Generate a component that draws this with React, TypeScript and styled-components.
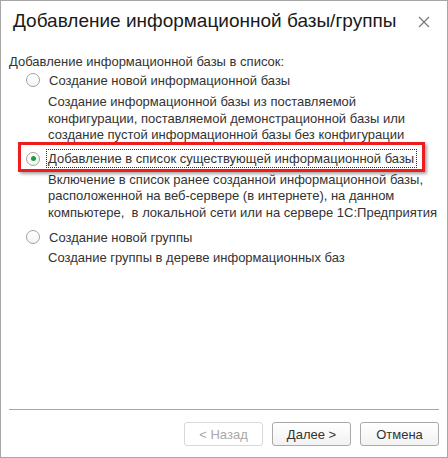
import React from 'react';
import styled, { createGlobalStyle } from 'styled-components';

const GlobalStyle = createGlobalStyle`
  html, body {
    margin: 0;
    padding: 0;
    background: #ffffff;
  }
  body {
    font-family: 'Liberation Sans', Arial, sans-serif;
    color: #333333;
  }
`;

const Window = styled.div`
  display: flex;
  flex-direction: column;
  width: 448px;
  height: 458px;
  box-sizing: border-box;
  border: 1px solid #a6a6a6;
  background: #ffffff;
`;

const Header = styled.div`
  display: flex;
  align-items: center;
  justify-content: space-between;
  height: 40px;
  padding: 0 16px 0 12px;
`;

const Title = styled.h1`
  margin: 0;
  font-size: 19px;
  font-weight: normal;
  color: #1a1a1a;
`;

const CloseButton = styled.button`
  display: flex;
  align-items: center;
  justify-content: center;
  width: 14px;
  height: 14px;
  margin-top: 2px;
  padding: 0;
  border: none;
  background: transparent;
  cursor: pointer;
`;

const Body = styled.div`
  flex: 1;
  padding: 13px 8px 0;
  font-size: 13px;
`;

const Subtitle = styled.div`
  line-height: 16px;
`;

const Row = styled.label<{ $highlight?: boolean }>`
  position: relative;
  display: flex;
  align-items: center;
  gap: 7px;
  height: 20px;
  padding-left: 17px;
  margin-top: ${(p) => (p.$highlight ? '5px' : '0')};

  ${(p) =>
    p.$highlight &&
    `
    &::before {
      content: '';
      position: absolute;
      left: 9px;
      right: 14px;
      top: -7px;
      bottom: -3px;
      border: 3px solid #ee1c1c;
      box-shadow: 2px 2px 3px rgba(0, 0, 0, 0.35);
      pointer-events: none;
    }
  `}
`;

const Radio = styled.span<{ $checked?: boolean }>`
  display: flex;
  align-items: center;
  justify-content: center;
  width: 14px;
  height: 14px;
  box-sizing: border-box;
  border: 1px solid #a3a3a3;
  border-radius: 50%;
  background: linear-gradient(#ffffff, #f4f4f4);
  flex-shrink: 0;

  &::after {
    content: '';
    display: ${(p) => (p.$checked ? 'block' : 'none')};
    width: 5px;
    height: 5px;
    border-radius: 50%;
    background: #1f9a47;
  }
`;

const RowLabel = styled.span<{ $focused?: boolean }>`
  line-height: 17px;
  padding: 0 2px 0 1px;
  margin-left: ${(p) => (p.$focused ? '-1px' : '0')};
  border: 1px dotted ${(p) => (p.$focused ? '#333333' : 'transparent')};
  white-space: nowrap;
`;

const Description = styled.div<{ $top: number; $bottom: number }>`
  padding-left: 39px;
  line-height: 16.5px;
  margin-top: ${(p) => p.$top}px;
  margin-bottom: ${(p) => p.$bottom}px;
`;

const Footer = styled.div`
  display: flex;
  flex-direction: column;
  padding: 0 8px 11px;
`;

const Separator = styled.div`
  height: 1px;
  background: #a6a6a6;
  margin-bottom: 12px;
`;

const Buttons = styled.div`
  display: flex;
  justify-content: flex-end;
  gap: 9px;
`;

const Button = styled.button<{ $disabled?: boolean }>`
  width: 79px;
  height: 24px;
  box-sizing: border-box;
  border-radius: 3px;
  border: 1px solid ${(p) => (p.$disabled ? '#d9d9d9' : '#a9a9a9')};
  background: ${(p) =>
    p.$disabled ? '#ffffff' : 'linear-gradient(#ffffff, #f2f2f2)'};
  color: ${(p) => (p.$disabled ? '#a9a9a9' : '#333333')};
  font-family: 'Liberation Sans', Arial, sans-serif;
  font-size: 13px;
  padding: 0;
  cursor: ${(p) => (p.$disabled ? 'default' : 'pointer')};
`;

function CloseIcon() {
  return (
    <svg width="12" height="12" viewBox="0 0 12 12">
      <path d="M1 1 L11 11 M11 1 L1 11" stroke="#7a7a7a" strokeWidth="1.2" fill="none" />
    </svg>
  );
}

export default function App() {
  return (
    <>
      <GlobalStyle />
      <Window>
        <Header>
          <Title>Добавление информационной базы/группы</Title>
          <CloseButton aria-label="Закрыть">
            <CloseIcon />
          </CloseButton>
        </Header>
        <Body>
          <Subtitle>Добавление информационной базы в список:</Subtitle>
          <Row>
            <Radio />
            <RowLabel>Создание новой информационной базы</RowLabel>
          </Row>
          <Description $top={4} $bottom={0}>
            Создание информационной базы из поставляемой
            <br />
            конфигурации, поставляемой демонстрационной базы или
            <br />
            создание пустой информационной базы без конфигурации
          </Description>
          <Row $highlight>
            <Radio $checked />
            <RowLabel $focused>Добавление в список существующей информационной базы</RowLabel>
          </Row>
          <Description $top={3} $bottom={6}>
            Включение в список ранее созданной информационной базы,
            <br />
            расположенной на веб-сервере (в интернете), на данном
            <br />
            компьютере,&nbsp; в локальной сети или на сервере 1С:Предприятия
          </Description>
          <Row>
            <Radio />
            <RowLabel>Создание новой группы</RowLabel>
          </Row>
          <Description $top={3} $bottom={0}>
            Создание группы в дереве информационных баз
          </Description>
        </Body>
        <Footer>
          <Separator />
          <Buttons>
            <Button $disabled disabled>
              &lt; Назад
            </Button>
            <Button>Далее &gt;</Button>
            <Button>Отмена</Button>
          </Buttons>
        </Footer>
      </Window>
    </>
  );
}
